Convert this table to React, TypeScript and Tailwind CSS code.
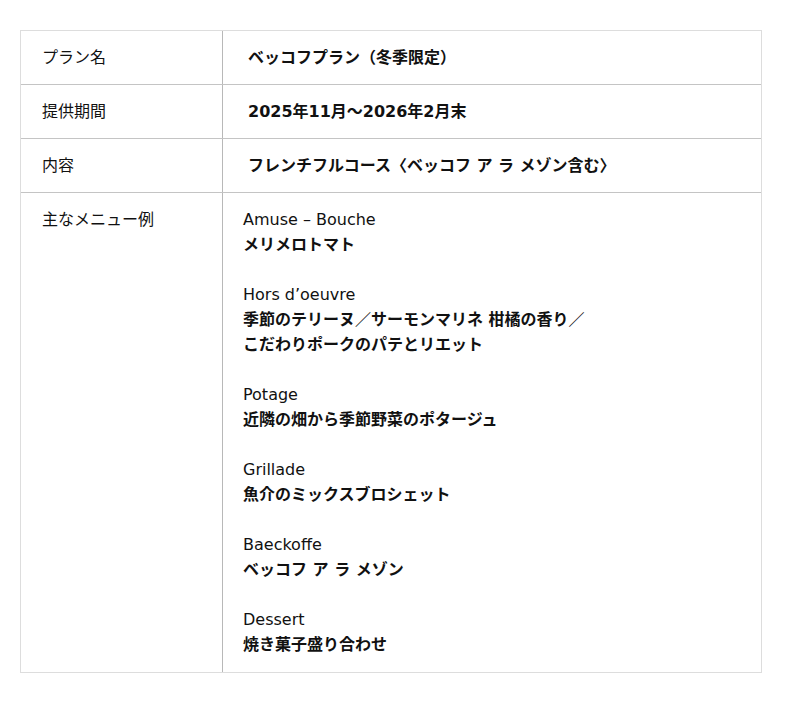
import React from 'react';

const menu = [
  { name: 'Amuse – Bouche', lines: ['メリメロトマト'] },
  { name: 'Hors d’oeuvre', lines: ['季節のテリーヌ／サーモンマリネ 柑橘の香り／', 'こだわりポークのパテとリエット'] },
  { name: 'Potage', lines: ['近隣の畑から季節野菜のポタージュ'] },
  { name: 'Grillade', lines: ['魚介のミックスブロシェット'] },
  { name: 'Baeckoffe', lines: ['ベッコフ ア ラ メゾン'] },
  { name: 'Dessert', lines: ['焼き菓子盛り合わせ'] },
];

const rows = [
  { label: 'プラン名', value: 'ベッコフプラン（冬季限定）' },
  { label: '提供期間', value: '2025年11月〜2026年2月末' },
  { label: '内容', value: 'フレンチフルコース〈ベッコフ ア ラ メゾン含む〉' },
];

const App = () => {
  return (
    <div
      className="min-h-screen bg-white text-[#111] text-[16px] leading-[25px]"
      style={{ fontFamily: '"DejaVu Sans", "Noto Sans CJK JP", sans-serif' }}
    >
      <div className="ml-[20px] mt-[30px] w-[742px] border border-[#dddddd]">
        {rows.map((row, i) => (
          <div key={row.label} className={`flex ${i > 0 ? 'border-t border-[#c4c4c4]' : ''}`}>
            <div className="w-[202px] shrink-0 border-r border-[#b8b8b8] py-[14px] pl-[21px]">
              {row.label}
            </div>
            <div className="flex-1 py-[14px] pl-[25px] font-bold">{row.value}</div>
          </div>
        ))}
        <div className="flex border-t border-[#c4c4c4]">
          <div className="w-[202px] shrink-0 border-r border-[#b8b8b8] pt-[14px] pb-[15px] pl-[21px]">
            主なメニュー例
          </div>
          <div className="flex-1 pt-[14px] pb-[15px] pl-[20px]">
            {menu.map((item, i) => (
              <div key={item.name} className={i > 0 ? 'mt-[25px]' : ''}>
                <div>{item.name}</div>
                {item.lines.map((line) => (
                  <div key={line} className="font-bold">{line}</div>
                ))}
              </div>
            ))}
          </div>
        </div>
      </div>
    </div>
  );
};

export default App;
